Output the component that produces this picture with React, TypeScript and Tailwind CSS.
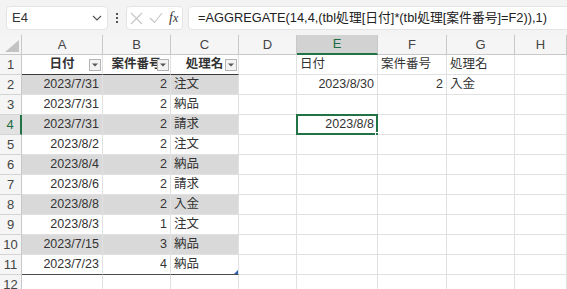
import React from 'react';

const COLS = ['A', 'B', 'C', 'D', 'E', 'F', 'G', 'H'];

type Cell = { v: string; align?: 'left' | 'right' | 'center'; bold?: boolean; filter?: boolean };

const table: [string, string, string][] = [
  ['2023/7/31', '2', '注文'],
  ['2023/7/31', '2', '納品'],
  ['2023/7/31', '2', '請求'],
  ['2023/8/2', '2', '注文'],
  ['2023/8/4', '2', '納品'],
  ['2023/8/6', '2', '請求'],
  ['2023/8/8', '2', '入金'],
  ['2023/8/3', '1', '注文'],
  ['2023/7/15', '3', '納品'],
  ['2023/7/23', '4', '納品'],
];

// sheet contents, keyed by row then column letter
const sheet: Record<number, Record<string, Cell>> = {
  1: {
    A: { v: '日付', align: 'center', bold: true, filter: true },
    B: { v: '案件番号', align: 'center', bold: true, filter: true },
    C: { v: '処理名', align: 'center', bold: true, filter: true },
    E: { v: '日付' },
    F: { v: '案件番号' },
    G: { v: '処理名' },
  },
  2: {
    E: { v: '2023/8/30', align: 'right' },
    F: { v: '2', align: 'right' },
    G: { v: '入金' },
  },
  4: {
    E: { v: '2023/8/8', align: 'right' },
  },
};
table.forEach((r, i) => {
  const row = i + 2;
  sheet[row] = {
    ...(sheet[row] || {}),
    A: { v: r[0], align: 'right' },
    B: { v: r[1], align: 'right' },
    C: { v: r[2] },
  };
});

function FilterButton() {
  return (
    <div className="absolute right-[1px] bottom-[3px] w-[12px] h-[12px] bg-[#f3f3f3] border border-[#b4b4b4] flex items-center justify-center">
      <svg width="6" height="4" viewBox="0 0 6 4">
        <path d="M0 0.5h6L3 3.5z" fill="#555" />
      </svg>
    </div>
  );
}

function DataCell({ row, col }: { row: number; col: string }) {
  const cell = sheet[row]?.[col];
  const inTable = row >= 1 && row <= 11 && (col === 'A' || col === 'B' || col === 'C');
  const band = inTable && row > 1 && row % 2 === 0;
  const selected = row === 4 && col === 'E';

  let bottom = 'border-b-[#e1e1e1]';
  if (inTable && row === 1) bottom = 'border-b-[#3a3a3a]';
  if (inTable && row === 11) bottom = 'border-b-[#4a4a4a]';

  const align =
    cell?.align === 'right' ? 'justify-end' : cell?.align === 'center' ? 'justify-center' : 'justify-start';

  return (
    <div
      className={`relative h-[20px] border-r border-b border-r-[#e1e1e1] ${bottom} flex items-center px-[3px] whitespace-nowrap ${align} ${
        band ? 'bg-[#d9d9d9]' : 'bg-white'
      }`}
    >
      {cell && (
        <span className={`text-[12.5px] leading-none text-[#333] ${cell.bold ? 'font-bold text-[#222]' : ''}`}>
          {cell.v}
        </span>
      )}
      {cell?.filter && <FilterButton />}
      {inTable && row === 11 && col === 'C' && (
        <svg className="absolute right-0 bottom-0" width="4" height="4" viewBox="0 0 4 4">
          <path d="M4 0v4H0z" fill="#2b5fb4" />
        </svg>
      )}
      {selected && (
        <>
          <div className="absolute left-[-1px] top-[-1px] right-[-1px] bottom-[-1px] border-2 border-[#217346]" />
          <div className="absolute right-[-3px] bottom-[-3px] w-[5px] h-[5px] bg-[#217346] border border-white" />
        </>
      )}
    </div>
  );
}

export default function App() {
  const rows = Array.from({ length: 12 }, (_, i) => i + 1);

  return (
    <div className="w-[567px] h-[289px] overflow-hidden bg-[#f3f3f3] font-['Liberation_Sans','Noto_Sans_CJK_JP',sans-serif] text-[#333]">
      {/* formula bar */}
      <div className="h-[35px] flex items-start pt-[6px] pl-[6px]">
        <div className="w-[102px] h-[24px] bg-white rounded-[4px] border border-[#e4e4e4] flex items-center justify-between pl-[5px] pr-[5px] shrink-0">
          <span className="text-[13px] text-[#333]">E4</span>
          <svg width="10" height="6" viewBox="0 0 10 6">
            <path d="M1 1l4 4 4-4" fill="none" stroke="#555" strokeWidth="1.2" />
          </svg>
        </div>
        <div className="w-[18px] h-[24px] flex flex-col items-center justify-center gap-[2px] shrink-0">
          <span className="w-[2px] h-[2px] bg-[#555]" />
          <span className="w-[2px] h-[2px] bg-[#555]" />
          <span className="w-[2px] h-[2px] bg-[#555]" />
        </div>
        <div className="w-[57px] h-[24px] bg-white rounded-[4px] border border-[#e4e4e4] flex items-center pl-[3px] gap-[6px] shrink-0">
          <svg width="13" height="13" viewBox="0 0 13 13">
            <path d="M1 1l11 11M12 1L1 12" stroke="#c4c4c4" strokeWidth="1.1" />
          </svg>
          <svg width="14" height="12" viewBox="0 0 14 12">
            <path d="M1 6l4.5 4.5L13 1" fill="none" stroke="#c4c4c4" strokeWidth="1.1" />
          </svg>
          <span className="font-['Liberation_Serif',serif] italic text-[14px] text-[#333] leading-none">
            f<span className="text-[12px]">x</span>
          </span>
        </div>
        <div className="ml-[5px] w-[400px] h-[24px] bg-white rounded-[4px] border border-[#e4e4e4] flex items-center pl-[9px] shrink-0">
          <span className="text-[12.8px] text-[#222] whitespace-nowrap">
            =AGGREGATE(14,4,(tbl処理[日付]*(tbl処理[案件番号]=F2)),1)
          </span>
        </div>
      </div>

      {/* sheet grid */}
      <div className="grid grid-cols-[22px_81px_68px_68px_58px_81px_69px_68px_1fr]">
        {/* column header row */}
        <div className="relative h-[20px] bg-[#f5f5f5] border-r border-b border-[#c8c8c8]">
          <svg className="absolute right-[2px] bottom-[2px]" width="14" height="12" viewBox="0 0 14 12">
            <path d="M14 0v12H0z" fill="#c3c3c3" />
          </svg>
        </div>
        {COLS.map((c) => (
          <div
            key={c}
            className={`h-[20px] flex items-center justify-center text-[13px] border-r ${
              c === 'E'
                ? 'bg-[#d2d2d2] text-[#1e6b42] border-r-[#c8c8c8] border-b-2 border-b-[#217346]'
                : 'bg-[#f5f5f5] text-[#444] border-b border-[#c8c8c8]'
            }`}
          >
            {c}
          </div>
        ))}

        {rows.map((r) => (
          <React.Fragment key={r}>
            <div
              className={`h-[20px] flex items-center justify-center text-[13px] border-b border-b-[#d4d4d4] ${
                r === 4
                  ? 'bg-[#e2e2e2] text-[#1e6b42] border-r-2 border-r-[#217346]'
                  : 'bg-[#f5f5f5] text-[#444] border-r border-r-[#c8c8c8]'
              }`}
            >
              {r}
            </div>
            {COLS.map((c) => (
              <DataCell key={c} row={r} col={c} />
            ))}
          </React.Fragment>
        ))}
      </div>
    </div>
  );
}
